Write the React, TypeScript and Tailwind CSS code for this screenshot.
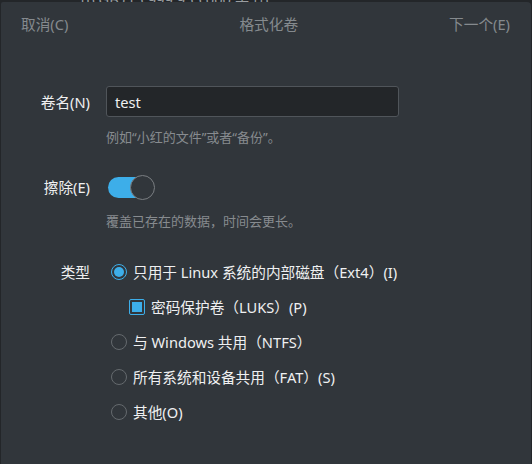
import React from 'react';

const font = "font-['Noto_Sans','Noto_Sans_CJK_SC',sans-serif]";

function Radio({ checked, label }: { checked?: boolean; label: string }) {
  return (
    <div className="flex h-[35px] items-center ml-[5px]">
      {checked ? (
        <span className="flex h-[16px] w-[16px] items-center justify-center rounded-full border border-[#3daee9]">
          <span className="h-[10px] w-[10px] rounded-full bg-[#3daee9]" />
        </span>
      ) : (
        <span className="h-[16px] w-[16px] rounded-full border border-[#656a6e]" />
      )}
      <span className="ml-[6px] text-[#eff0f1]">{label}</span>
    </div>
  );
}

export default function App() {
  return (
    <div className={`h-[464px] w-[532px] overflow-hidden bg-[#232629] text-[14.67px] ${font}`}>
      {/* bit of the window behind */}
      <div className="h-[2px] overflow-hidden">
        <div className="-mt-[12px] ml-[78px] text-[#9a9ea1]">16 GB (15,999,955,000 字节)</div>
      </div>

      <div className="ml-[1px] mr-[1px] h-[462px] rounded-tr-[4px] rounded-tl-[2px] bg-[#31363b]">
        {/* header */}
        <div className="flex h-[44px] items-center justify-between pl-[20px] pr-[21px] text-[#858a8e]">
          <span>取消(C)</span>
          <span className="ml-[20px]">格式化卷</span>
          <span>下一个(E)</span>
        </div>

        <div className="mt-[40px] grid grid-cols-[89px_293px] gap-x-[16px]">
          <div className="flex h-[31px] items-center justify-end text-[#eff0f1]">卷名(N)</div>
          <div className="flex h-[31px] items-center rounded-[3px] border border-[#50555a] bg-[#232629] pl-[8px] text-[#eff0f1]">
            test
          </div>
          <div />
          <div className="mt-[11px] text-[13px] leading-[18px] text-[#878b8f]">
            例如“小红的文件”或者“备份”。
          </div>

          <div className="mt-[28px] flex h-[26px] items-center justify-end text-[#eff0f1]">擦除(E)</div>
          <div className="mt-[28px] flex h-[26px] items-center">
            <div className="relative ml-[2px] h-[21px] w-[47px]">
              <div className="absolute left-0 top-0 h-[21px] w-[40px] rounded-full bg-[#3daee9]" />
              <div className="absolute right-0 top-[-2px] h-[25px] w-[25px] rounded-full border border-[#7a7e82] bg-[#31363b]" />
            </div>
          </div>
          <div />
          <div className="mt-[12px] text-[13px] leading-[18px] text-[#878b8f]">
            覆盖已存在的数据，时间会更长。
          </div>

          <div className="mt-[24px] flex h-[35px] items-center justify-end text-[#eff0f1]">类型</div>
          <div className="mt-[24px]">
            <Radio checked label="只用于 Linux 系统的内部磁盘（Ext4）(I)" />
            <div className="flex h-[35px] items-center ml-[23px]">
              <span className="flex h-[16px] w-[16px] items-center justify-center rounded-[2px] border border-[#3daee9]">
                <span className="h-[10px] w-[10px] bg-[#3daee9]" />
              </span>
              <span className="ml-[6px] text-[#eff0f1]">密码保护卷（LUKS）(P)</span>
            </div>
            <Radio label="与 Windows 共用（NTFS）" />
            <Radio label="所有系统和设备共用（FAT）(S)" />
            <Radio label="其他(O)" />
          </div>
        </div>
      </div>
    </div>
  );
}
